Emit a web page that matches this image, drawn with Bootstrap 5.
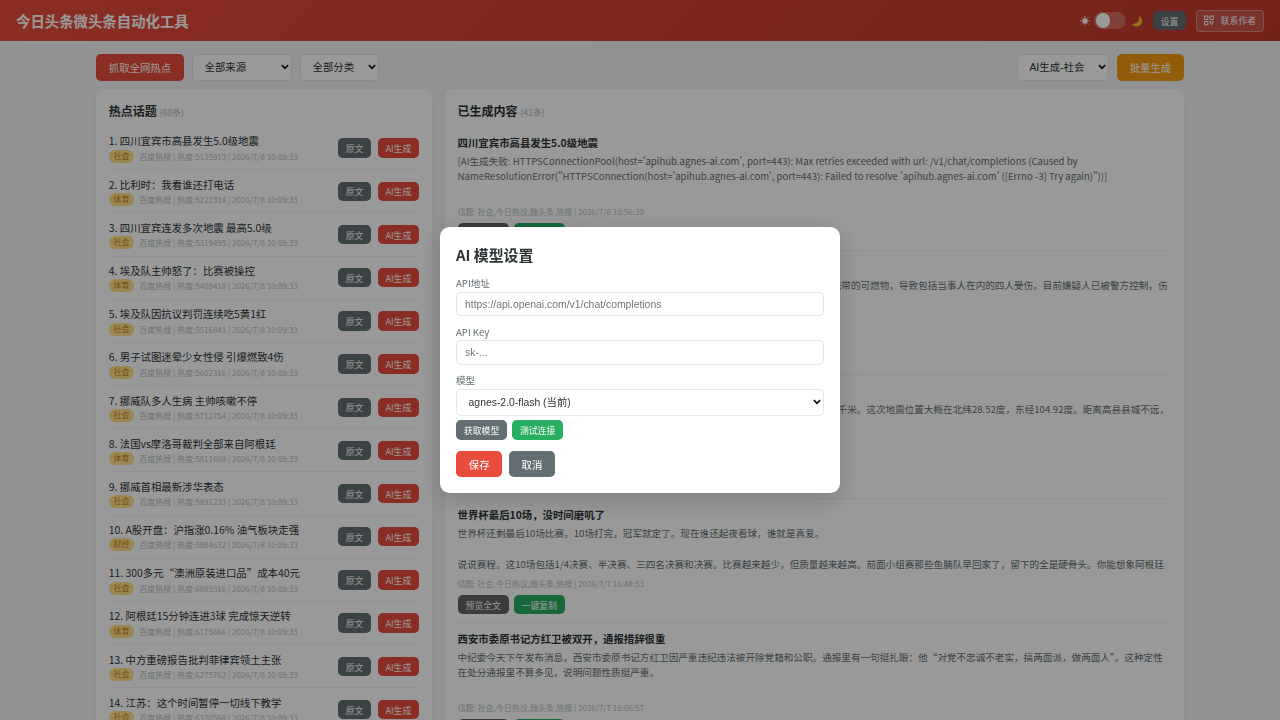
<!DOCTYPE html>
<html lang="zh-CN">
<head>
<meta charset="utf-8">
<meta name="viewport" content="width=device-width, initial-scale=1">
<title>今日头条微头条自动化工具</title>
<link href="https://cdn.jsdelivr.net/npm/bootstrap@5.3.0/dist/css/bootstrap.min.css" rel="stylesheet">
<style>
  :root { --ink:#2d3436; --sub:#636e72; --line:#e3e8ea; --faint:#b2bec3; --ui:"Liberation Sans","Noto Sans CJK SC",sans-serif; }
  body { height:100vh; overflow:hidden; background:#f3f4f8; color:var(--ink); font-family:"Noto Sans CJK SC",sans-serif; font-size:11.2px; line-height:1.5; }
  .topbar { height:41.4px; padding:0 16px; background:linear-gradient(135deg,#e74c3c,#c0392b); color:#fff; }
  .topbar h1 { font-size:14.4px; font-weight:700; line-height:1.5; }
  .btn { --bs-btn-color:#fff; --bs-btn-border-width:0; font-size:10.4px; line-height:15.6px; height:26.6px; padding:6.2px 12.8px 4.6px; border-radius:4.8px; white-space:nowrap; }
  .btn-sm { font-size:8.8px; line-height:13px; height:19.4px; padding:3.9px 8px 2.5px; }
  .btn-main { background:#e74c3c; } .btn-slate { background:#636e72; } .btn-leaf { background:#27ae60; } .btn-amber { background:#f39c12; } .btn-view { background:#636466; }
  .btn-contact { height:22.4px; width:68px; padding:0 7px; border:1px solid rgba(255,255,255,.3); background:rgba(255,255,255,.15); border-radius:4px; gap:6.8px; }
  .toggle { width:32px; height:17.6px; border-radius:9px; background:rgba(255,255,255,.25); padding:1.6px; margin:0 5px 0 4.3px; }
  .toggle span { width:14.4px; height:14.4px; border-radius:50%; background:#fff; }
  .page { width:1088px; margin:12.8px auto 0; }
  .form-select { width:auto; height:26.6px; padding:1px 11.6px 0; font-family:var(--ui); font-size:10.4px; line-height:24px; color:var(--ink); border:1px solid var(--line); border-radius:4.8px; background-color:#fff;
    background-image:url("data:image/svg+xml,%3Csvg xmlns='http://www.w3.org/2000/svg' viewBox='0 0 8 6'%3E%3Cpath d='M.9 1.1 4 4.3 7.1 1.1' fill='none' stroke='%23111' stroke-width='1.7'/%3E%3C/svg%3E"); background-size:8px 6px; background-position:right 2.2px center; }
  .cols { display:grid; grid-template-columns:336px 739.2px; gap:12.8px; margin-top:8px; }
  .panel { height:700px; padding:12.8px; background:#fff; border-radius:8px; box-shadow:0 1.6px 8px rgba(0,0,0,.04); }
  .panel h2 { font-size:12px; font-weight:700; line-height:18.4px; margin:0 0 5px; }
  .panel h2 span { font-size:8.8px; font-weight:400; color:var(--faint); }
  .topic { height:43.2px; padding:6.4px 0; border-bottom:1px solid #f0f2f2; }
  .topic h3 { font-size:10.4px; font-weight:400; line-height:16.4px; margin:0; }
  .meta { font-size:8px; line-height:13px; color:var(--faint); }
  .tag { display:inline-block; padding:0 4.8px; margin-right:4.8px; border-radius:6.4px; background:#ffe08a; color:#c8820f; line-height:12.8px; }
  .post { height:124px; padding:8px 0 7.8px; border-bottom:1px solid #f0f2f2; }
  .post h3 { font-size:10.4px; font-weight:700; line-height:16.2px; margin:0 0 2.7px; }
  .post p { height:46.1px; margin:0; font-size:9.6px; line-height:15.36px; color:var(--sub); white-space:nowrap; overflow:hidden; }
  .post .meta { margin-top:6.4px; line-height:12.4px; margin-bottom:4px; }
  .modal { background:rgba(0,0,0,.4); }
  .modal-dialog { width:400px; max-width:400px; margin:0 auto; min-height:100%; }
  .modal-content { height:266.4px; padding:16px; border:0; border-radius:9.6px; color:var(--ink); box-shadow:0 6.4px 25.6px rgba(0,0,0,.18); }
  .modal-title { font-size:14.9px; font-weight:700; line-height:23.4px; margin-bottom:9.8px; }
  .form-label { display:block; margin:0; font-size:9.6px; line-height:15.6px; color:var(--sub); }
  .form-control { height:25px; padding:0 8px; margin-bottom:8.3px; font-family:var(--ui); font-size:10.4px; line-height:22px; border:1px solid var(--line); border-radius:4.8px; }
  .form-control::placeholder { color:#757575; opacity:1; }
</style>
</head>
<body>
<header class="topbar d-flex align-items-center justify-content-between">
  <h1 class="m-0">今日头条微头条自动化工具</h1>
  <div class="d-flex align-items-center">
    <svg width="10" height="10" viewBox="0 0 10 10" fill="#fff" stroke="#fff" stroke-width=".9"><circle cx="5" cy="5" r="2.4"/><path d="M5 0v1.500M5 8.500V10M0 5h1.500M8.500 5H10M1.500 1.500l1 1M7.500 7.500l1 1M1.500 8.500l1-1M7.500 2.500l1-1"/></svg>
    <div class="toggle d-flex"><span></span></div>
    <svg width="12" height="12" viewBox="0 0 12 12"><path d="M7.800 1.300C9.200 5 6.200 9 .9 8.900 3 12.200 8 12.200 10.200 9.100 12.200 6.100 11 2.600 7.800 1.300Z" fill="#fbc02d"/></svg>
    <button class="btn btn-sm btn-slate" style="margin:0 9.6px 0 9.4px">设置</button>
    <button class="btn btn-sm btn-contact d-flex align-items-center">
      <svg width="11" height="11" viewBox="0 0 11 11" fill="none" stroke="#fff" stroke-width="1.100"><path d="M.6.600h3.700v3.700H.6zM6.500.600h3.700v3.700H6.500zM.6 6.500h3.700v3.700H.6zM6 6.500h1.800M7 6.500v2M9.800 6v2.200M7.500 9h1.800M8.500 8v2.500"/></svg>
      <span>联系作者</span></button>
  </div>
</header>

<main class="page">
  <div class="d-flex justify-content-between">
    <div class="d-flex gap-2">
      <button class="btn btn-main">抓取全网热点</button>
      <select class="form-select" style="width:100px"><option>全部来源</option></select>
      <select class="form-select" style="width:79px"><option>全部分类</option></select>
    </div>
    <div class="d-flex gap-2">
      <select class="form-select" style="width:92px"><option>AI生成-社会</option></select>
      <button class="btn btn-amber">批量生成</button>
    </div>
  </div>
  <div class="cols">
    <section class="panel"><h2>热点话题 <span>(60条)</span></h2><div id="topics"></div></section>
    <section class="panel"><h2>已生成内容 <span>(41条)</span></h2><div id="posts"></div></section>
  </div>
</main>

<div class="modal d-block" tabindex="-1">
  <div class="modal-dialog modal-dialog-centered">
    <div class="modal-content">
      <h2 class="modal-title">AI 模型设置</h2>
      <label class="form-label">API地址</label>
      <input class="form-control" placeholder="https://api.openai.com/v1/chat/completions">
      <label class="form-label">API Key</label>
      <input class="form-control" placeholder="sk-...">
      <label class="form-label">模型</label>
      <select class="form-select w-100"><option>agnes-2.0-flash (当前)</option></select>
      <div class="d-flex" style="gap:4.8px;margin-top:4.8px">
        <button class="btn btn-sm btn-slate">获取模型</button><button class="btn btn-sm btn-leaf">测试连接</button>
      </div>
      <div class="d-flex" style="gap:6.4px;margin-top:10.8px">
        <button class="btn btn-main">保存</button><button class="btn btn-slate">取消</button>
      </div>
    </div>
  </div>
</div>

<script>
const topics = [
  ['四川宜宾市高县发生5.0级地震','社会','5135913'],
  ['比利时：我看谁还打电话','体育','5222314'],
  ['四川宜宾连发多次地震 最高5.0级','社会','5319495'],
  ['埃及队主帅怒了：比赛被操控','体育','5409418'],
  ['埃及队因抗议判罚连续吃5黄1红','社会','5516841'],
  ['男子试图迷晕少女性侵 引爆燃致4伤','社会','5602316'],
  ['挪威队多人生病 主帅咳嗽不停','社会','5712754'],
  ['法国vs摩洛哥裁判全部来自阿根廷','体育','5811608'],
  ['挪威首相最新涉华表态','社会','5891233'],
  ['A股开盘：沪指涨0.16% 油气板块走强','财经','5984632'],
  ['300多元“澳洲原装进口品”成本40元','社会','6089316'],
  ['阿根廷15分钟连进3球 完成惊天逆转','体育','6175666'],
  ['中方重磅报告批判菲律宾领土主张','社会','6275762'],
  ['江苏：这个时间暂停一切线下教学','社会','6370588']
];
const posts = [
  ['四川宜宾市高县发生5.0级地震', `[AI生成失败: HTTPSConnectionPool(host='apihub.agnes-ai.com', port=443): Max retries exceeded with url: /v1/chat/completions (Caused by<br>NameResolutionError("HTTPSConnection(host='apihub.agnes-ai.com', port=443): Failed to resolve 'apihub.agnes-ai.com' ([Errno -3] Try again)"))]`, '2026/7/8 10:56:39'],
  ['男子试图迷晕少女性侵 引爆燃致4伤', '据当地警方通报，一名男子试图迷晕少女实施侵害，被发现后慌乱之中点燃了自己随身所携带的可燃物，导致包括当事人在内的四人受伤。目前嫌疑人已被警方控制，伤', '2026/7/8 10:20:11'],
  ['四川宜宾市高县发生5.0级地震', '7月8日，四川宜宾市高县发生5.0级地震，很多网友都说当时明显感觉到晃动，震源深度10千米。这次地震位置大概在北纬28.52度，东经104.92度。距离高县县城不远，', '2026/7/8 10:12:40'],
  ['世界杯最后10场，没时间磨叽了', '世界杯还剩最后10场比赛。10场打完，冠军就定了。现在谁还起夜看球，谁就是真爱。<br><br>说说赛程。这10场包括1/4决赛、半决赛、三四名决赛和决赛。比赛越来越少，但质量越来越高。前面小组赛那些鱼腩队早回家了，留下的全是硬骨头。你能想象阿根廷', '2026/7/7 16:48:53'],
  ['西安市委原书记方红卫被双开，通报措辞很重', '中纪委今天下午发布消息，西安市委原书记方红卫因严重违纪违法被开除党籍和公职。通报里有一句挺扎眼：他“对党不忠诚不老实，搞两面派，做两面人”。这种定性<br>在处分通报里不算多见，说明问题性质挺严重。', '2026/7/7 16:06:57']
];
document.getElementById('topics').innerHTML = topics.map(([t, tag, heat], i) => `
  <div class="topic d-flex align-items-center justify-content-between">
    <div><h3>${i + 1}. ${t}</h3>
      <div class="meta d-flex"><span class="tag">${tag}</span><span>百度热搜 | 热度:${heat} | 2026/7/8 10:09:33</span></div></div>
    <div class="d-flex" style="gap:6.4px"><button class="btn btn-sm btn-slate">原文</button><button class="btn btn-sm btn-main">AI生成</button></div>
  </div>`).join('');
document.getElementById('posts').innerHTML = posts.map(([t, body, time]) => `
  <article class="post"><h3>${t}</h3><p>${body}</p>
    <div class="meta">话题: 社会,今日热议,微头条,热搜 | ${time}</div>
    <div class="d-flex" style="gap:4.8px"><button class="btn btn-sm btn-view">预览全文</button><button class="btn btn-sm btn-leaf">一键复制</button></div>
  </article>`).join('');
</script>
<script src="https://cdn.jsdelivr.net/npm/bootstrap@5.3.0/dist/js/bootstrap.bundle.min.js"></script>
</body>
</html>
